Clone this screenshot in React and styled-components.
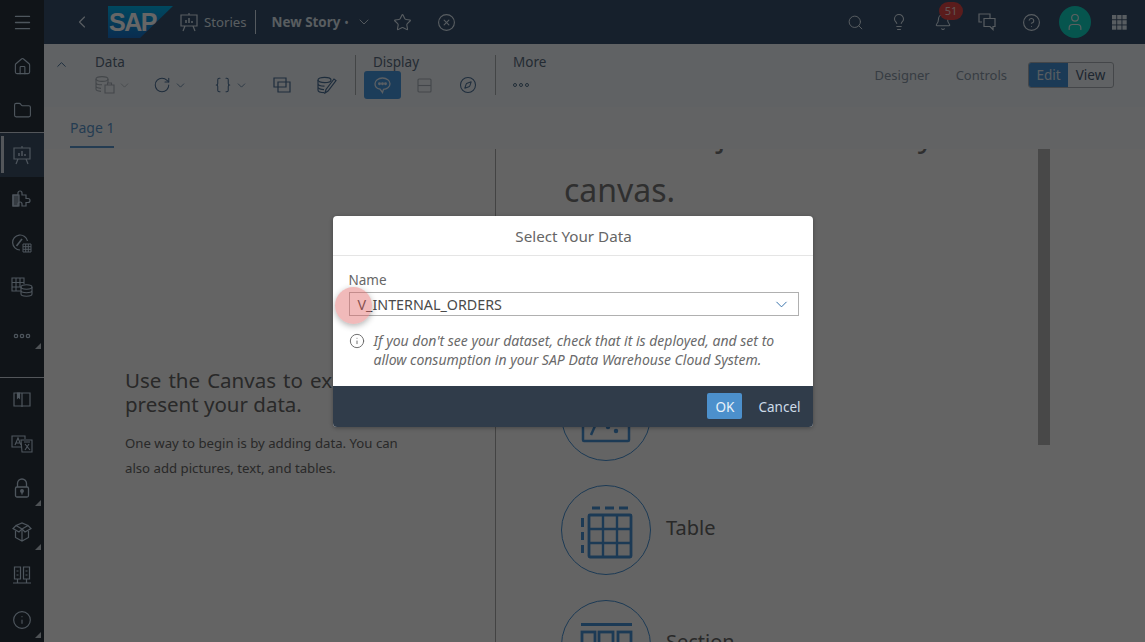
import React from "react";
import styled, { createGlobalStyle } from "styled-components";
import {
  Menu, House, Folder, Info, ChevronLeft, ChevronDown, ChevronUp,
  Search, Lightbulb, Bell, CircleHelp, User, Star, CircleX, RotateCw, Braces, Compass,
} from "lucide-react";

const GlobalStyle = createGlobalStyle`
  html, body { margin: 0; padding: 0; height: 100%; overflow: hidden; }
  body { font-family: "Noto Sans", "Open Sans", sans-serif; }
  * { box-sizing: border-box; }
`;

const Shell = styled.div`
  position: relative;
  display: flex;
  width: 1145px;
  height: 642px;
  overflow: hidden;
  background: #fafafa;
`;

const Sidebar = styled.nav`
  width: 44px;
  flex-shrink: 0;
  display: flex;
  flex-direction: column;
  background: #28343e;
  color: #c4d6e8;
`;

const SideGroup = styled.div`
  display: flex;
  flex-direction: column;
  border-top: ${(p) => (p.$line ? "1px solid #d0d8e0" : "none")};
  margin-top: ${(p) => p.$push || 0}px;
`;

const SideItem = styled.div`
  position: relative;
  height: 44px;
  display: flex;
  align-items: center;
  justify-content: center;
  padding-top: ${(p) => (p.$dots ? "10px" : "0")};
  background: ${(p) => (p.$active ? "#3c5168" : "transparent")};

  ${(p) =>
    p.$active &&
    `&::before {
      content: "";
      position: absolute;
      left: 1px;
      top: 3px;
      bottom: 4px;
      width: 3px;
      background: #d0d8e0;
    }`}

  ${(p) =>
    p.$corner &&
    `&::after {
      content: "";
      position: absolute;
      right: 3px;
      bottom: 4px;
      border-style: solid;
      border-width: 0 0 6px 6px;
      border-color: transparent transparent #c4ccd4 transparent;
    }`}
`;

const Main = styled.div`
  flex: 1;
  min-width: 0;
  display: flex;
  flex-direction: column;
`;

const Header = styled.header`
  height: 44px;
  flex-shrink: 0;
  display: flex;
  align-items: center;
  background: #37506e;
  color: #dce8f2;
  padding-left: 28px;
`;

const BackButton = styled.div`
  width: 20px;
  display: flex;
  justify-content: center;
  margin-right: 16px;
`;

const CrumbIcon = styled.div`
  display: flex;
  margin: 0 5px 0 6px;
`;

const Crumb = styled.span`
  font-size: 13.2px;
  color: #dfe8f0;
  white-space: nowrap;
`;

const Separator = styled.div`
  width: 1px;
  height: 24px;
  background: #d5e2ee;
  margin: 0 16px 0 8px;
`;

const StoryName = styled.span`
  font-size: 13.4px;
  font-weight: 700;
  color: #dfe8f0;
  white-space: nowrap;
`;

const Dirty = styled.span`
  font-size: 12px;
  margin: 0 7px 0 4px;
`;

const HeaderIcon = styled.div`
  position: relative;
  width: 44px;
  height: 44px;
  flex-shrink: 0;
  display: flex;
  align-items: center;
  justify-content: center;
`;

const HeaderLeft = styled.div`
  display: flex;
  margin-left: 9px;
`;

const HeaderRight = styled.div`
  margin-left: auto;
  display: flex;
  margin-right: 4px;
`;

const Badge = styled.span`
  position: absolute;
  left: 18px;
  top: 2px;
  width: 24px;
  height: 18px;
  border-radius: 9px;
  background: #e04848;
  color: #f4d4d4;
  font-size: 11px;
  line-height: 18px;
  text-align: center;
`;

const Avatar = styled.div`
  width: 32px;
  height: 32px;
  border-radius: 50%;
  background: #10d4c4;
  display: flex;
  align-items: center;
  justify-content: center;
  color: #e6f2f0;
`;

const Toolbar = styled.div`
  height: 63px;
  flex-shrink: 0;
  display: flex;
  background: #f0f5fa;
  padding: 11px 31px 0 10px;
`;

const Collapse = styled.div`
  width: 14px;
  height: 14px;
  margin-right: 27px;
  color: #3d6a94;
`;

const ToolGroup = styled.div`
  display: flex;
  flex-direction: column;
  width: ${(p) => p.$width}px;
  height: 40px;
  flex-shrink: 0;
  border-right: ${(p) => (p.$line ? "1px solid #a8acb0" : "none")};
`;

const ToolLabel = styled.div`
  font-size: 13.5px;
  line-height: 15px;
  height: 15px;
  margin-left: ${(p) => p.$indent || 0}px;
  color: #5a6c80;
`;

const ToolRow = styled.div`
  display: flex;
  align-items: center;
  min-height: 28px;
  margin-top: 1px;
  margin-left: ${(p) => p.$indent || 0}px;
`;

const ToolButton = styled.div`
  width: ${(p) => p.$width || 36}px;
  height: 28px;
  margin-right: ${(p) => p.$gap || 0}px;
  flex-shrink: 0;
  display: flex;
  align-items: center;
  justify-content: center;
  gap: 3px;
  border-radius: 3px;
  background: ${(p) => (p.$active ? "#4898e0" : "transparent")};
  color: ${(p) => (p.$active ? "#e4eef8" : p.$disabled ? "#a8b0b8" : "#4c7096")};
`;

const ToolDots = styled.div`
  display: flex;
  gap: 2px;
`;

const Dot = styled.span`
  width: 4px;
  height: 4px;
  border-radius: 50%;
  border: 1px solid #52708c;
`;

const ToolbarRight = styled.div`
  margin-left: auto;
  display: flex;
  align-items: center;
  height: 26px;
  margin-top: 7px;
`;

const ViewLink = styled.span`
  font-size: 13px;
  color: #8a98a8;
  margin-right: ${(p) => p.$gap}px;
`;

const Segmented = styled.div`
  display: flex;
  height: 26px;
  border: 1px solid #aab0b6;
  border-radius: 3px;
  overflow: hidden;
`;

const Segment = styled.div`
  width: ${(p) => p.$width}px;
  display: flex;
  align-items: center;
  justify-content: center;
  font-size: 13.5px;
  background: ${(p) => (p.$on ? "#4591d7" : "transparent")};
  color: ${(p) => (p.$on ? "#dde8f2" : "#4a6078")};
`;

const Tabs = styled.div`
  height: 42px;
  flex-shrink: 0;
  padding-left: 26px;
  background: #f6f8fa;
`;

const Tab = styled.div`
  display: inline-block;
  height: 41px;
  padding-top: 10px;
  font-size: 14px;
  line-height: 22px;
  color: #5a96cc;
  border-bottom: 2px solid #5a96cc;
  width: 44px;
  white-space: nowrap;
`;

const Content = styled.div`
  flex: 1;
  min-height: 0;
  display: flex;
  background: #fafafa;
`;

const IntroPanel = styled.section`
  width: 452px;
  flex-shrink: 0;
  border-right: 1px solid #a8a8a8;
  padding: 219px 81px 0;
`;

const IntroTitle = styled.h2`
  margin: 0 0 15px;
  font-size: 20.5px;
  line-height: 24px;
  font-weight: 400;
  color: #666;
  white-space: nowrap;

  &::first-line {
    word-spacing: 1.75px;
  }
`;

const IntroText = styled.p`
  margin: 0;
  font-size: 13.2px;
  line-height: 25px;
  color: #666;
  width: 290px;
`;

const ObjectsPanel = styled.section`
  flex: 1;
  min-width: 0;
  display: flex;
  overflow: hidden;
`;

const ObjectsBody = styled.div`
  flex: 1;
  min-width: 0;
  padding-left: 65px;
`;

const ObjectsTitle = styled.h2`
  margin: -43px 0 0 3px;
  font-size: 32px;
  line-height: 56px;
  font-weight: 400;
  color: #777;
  white-space: nowrap;
`;

const ObjectList = styled.div`
  display: flex;
  flex-direction: column;
  gap: 24.5px;
  margin-top: 38px;
`;

const ObjectItem = styled.div`
  display: flex;
  align-items: center;
  gap: 15px;
`;

const ObjectCircle = styled.div`
  width: 90px;
  height: 90px;
  flex-shrink: 0;
  border-radius: 50%;
  border: 1px solid #4691d4;
  color: #4691d4;
`;

const ObjectName = styled.span`
  font-size: 20px;
  color: #666;
  margin-bottom: 6px;
`;

const ScrollThumb = styled.div`
  width: 12px;
  height: 296px;
  flex-shrink: 0;
  margin-right: 95px;
  background: #b4b4b4;
`;

const Overlay = styled.div`
  position: absolute;
  inset: 0;
  background: rgba(0, 0, 0, 0.6);
  display: flex;
  align-items: center;
  justify-content: center;
`;

const Dialog = styled.div`
  position: relative;
  width: 480px;
  height: 211px;
  display: flex;
  flex-direction: column;
  background: #fff;
  border-radius: 4px;
  overflow: hidden;
  box-shadow: 0 1px 4px rgba(0, 0, 0, 0.3);
`;

const DialogTitle = styled.div`
  height: 40px;
  flex-shrink: 0;
  display: flex;
  align-items: center;
  justify-content: center;
  padding: 1px 0 0 2px;
  border-bottom: 1px solid #e5e5e5;
  font-size: 15.2px;
  color: #666;
`;

const DialogBody = styled.div`
  flex: 1;
  padding: 15px 14px 0 16px;
`;

const FieldLabel = styled.label`
  display: block;
  font-size: 13.5px;
  line-height: 18px;
  color: #666;
`;

const SelectBox = styled.div`
  height: 24px;
  margin-top: 3px;
  padding: 1px 7px 0 8px;
  display: flex;
  align-items: center;
  justify-content: space-between;
  border: 1px solid #b0b0b0;
  font-size: 14.3px;
  color: #4a4a4a;
`;

const Hint = styled.div`
  display: flex;
  gap: 9px;
  margin-top: 17px;
  color: #666;

  svg {
    flex-shrink: 0;
  }
`;

const HintText = styled.p`
  margin: -2px 0 0;
  font-size: 14px;
  line-height: 19.5px;
  font-style: italic;
  color: #6a6a6a;
`;

const DialogFooter = styled.div`
  height: 41px;
  flex-shrink: 0;
  display: flex;
  align-items: center;
  justify-content: flex-end;
  gap: 16px;
  padding-right: 12px;
  background: #303c4a;
`;

const OkButton = styled.div`
  width: 35px;
  height: 26px;
  padding-top: 1px;
  display: flex;
  align-items: center;
  justify-content: center;
  border-radius: 2px;
  background: #4c90cc;
  color: #e8f2fa;
  font-size: 13.5px;
`;

const CancelButton = styled.div`
  padding-top: 2px;
  font-size: 13.5px;
  color: #cddbe8;
`;

const ClickMark = styled.div`
  position: absolute;
  left: 2px;
  top: 71px;
  width: 37px;
  height: 37px;
  border-radius: 50%;
  background: rgba(222, 90, 90, 0.42);
  box-shadow: 0 2px 6px rgba(0, 0, 0, 0.3);
`;

const thin = { strokeWidth: 1.4 };

const SapLogo = () => (
  <svg width="65" height="33" viewBox="0 0 65 33">
    <defs>
      <linearGradient id="sapFill" x1="0" y1="0" x2="0" y2="1">
        <stop offset="0" stopColor="#00b4ee" />
        <stop offset="1" stopColor="#1a70c8" />
      </linearGradient>
    </defs>
    <polygon points="0,0 65,0 32,32 0,32" fill="url(#sapFill)" />
    <text x="1" y="25" fontFamily="Liberation Sans" fontWeight="700" fontSize="25" letterSpacing="-1.5" fill="#fff">
      SAP
    </text>
  </svg>
);

const BoardIcon = () => (
  <svg width="20" height="20" viewBox="0 0 20 20" fill="none" stroke="currentColor" strokeWidth="1.2">
    <path d="M10 1v2M2 3h16v11H2zM6 14l-2 5M14 14l2 5" />
    <path d="M7 11V8M10 11V6M13 11V9" strokeWidth="1.5" />
  </svg>
);

const BookIcon = () => (
  <svg width="18" height="18" viewBox="0 0 18 18" fill="none" stroke="currentColor" strokeWidth="1.2">
    <path d="M1 2h16v13H1zM9 2v14" />
    <path d="M4.500 2h2v5l-1-1-1 1z" fill="currentColor" />
  </svg>
);

const LockIcon = () => (
  <svg width="16" height="20" viewBox="0 0 16 20" fill="none" stroke="currentColor" strokeWidth="1.3">
    <path d="M3.500 9V5.500a4.500 4.500 0 0 1 9 0V9" />
    <rect x="1.500" y="9" width="13" height="10" rx="1.500" />
    <circle cx="8" cy="13" r="1.300" fill="currentColor" />
    <path d="M8 13v3.500" />
  </svg>
);

const PuzzleIcon = () => (
  <svg width="20" height="18" viewBox="0 0 20 18" fill="none" stroke="currentColor" strokeWidth="1.2">
    <path d="M1 5h5V3a2 2 0 0 1 4 0v2h4v3.500h2a2 2 0 0 1 0 4h-2V16H10v-2a2 2 0 0 0-4 0v2H1z" />
    <path d="M1 5h6v11H1z" fill="currentColor" fillOpacity="0.6" />
  </svg>
);

const GaugeIcon = () => (
  <svg width="20" height="20" viewBox="0 0 20 20" fill="none" stroke="currentColor" strokeWidth="1.2">
    <path d="M8 17A7.500 7.500 0 1 1 15.500 8" />
    <path d="M4.500 13L10 6" strokeWidth="1.6" />
    <path d="M11 11h8v8h-8zM13.700 11v8M16.300 11v8M11 13.700h8M11 16.300h8" strokeWidth="1" />
  </svg>
);

const TableDbIcon = () => (
  <svg width="22" height="20" viewBox="0 0 22 20" fill="none" stroke="currentColor" strokeWidth="1.1">
    <path d="M10 14H1V1h12v6M1 5.500h12M1 10h9M5 1v13M9 1v9" />
    <ellipse cx="15.500" cy="10" rx="5.500" ry="2.200" />
    <path d="M10 10v7c0 1.200 2.500 2.200 5.500 2.200s5.500-1 5.500-2.200v-7M10 13.500c0 1.200 2.500 2.200 5.500 2.200s5.500-1 5.500-2.200" />
  </svg>
);

const SideDots = () => (
  <svg width="18" height="6" viewBox="0 0 18 6" fill="none" stroke="currentColor" strokeWidth="1.2">
    <circle cx="3" cy="3" r="1.700" />
    <circle cx="9" cy="3" r="1.700" />
    <circle cx="15" cy="3" r="1.700" />
  </svg>
);

const TranslateIcon = () => (
  <svg width="22" height="18" viewBox="0 0 22 18" fill="none" stroke="currentColor" strokeWidth="1.1">
    <path d="M11 12H1V1h13v3" />
    <path d="M4 10l3-7 3 7M5 8h4" />
    <path d="M10 5h11v12H11z" />
    <path d="M13 7h6M14 9l5 6M18 9l-4 6" />
  </svg>
);

const BoxIcon = () => (
  <svg width="20" height="20" viewBox="0 0 20 20" fill="none" stroke="currentColor" strokeWidth="1.2">
    <path d="M10 7L4 3.500 1 6.500l6 3.500zM10 7l6-3.500 3 3-6 3.500zM4 3.500L10 1l6 2.500" />
    <path d="M3.500 9v6.500L10 19l6.500-3.500V9M10 7v12" />
  </svg>
);

const ServersIcon = () => (
  <svg width="18" height="20" viewBox="0 0 18 20" fill="none" stroke="currentColor" strokeWidth="1.2">
    <path d="M1.500 1h6v12h-6zM10.500 1h6v12h-6zM4.500 13v4M13.500 13v4M0 17h18M3.500 5h2M12.500 5h2M3.500 9h2M12.500 9h2" />
  </svg>
);

const ChatsIcon = () => (
  <svg width="18" height="18" viewBox="0 0 18 18" fill="none" stroke="currentColor" strokeWidth="1.2">
    <path d="M4 9H1V1h11v4" />
    <path d="M6 5.500h11v8h-2v3l-3-3H6z" />
  </svg>
);

const GridIcon = () => (
  <svg width="15" height="15" viewBox="0 0 15 15" fill="currentColor">
    {[0, 5.2, 10.4].map((y) =>
      [0, 5.2, 10.4].map((x) => <rect key={`${x}-${y}`} x={x} y={y} width="4.300" height="4.300" />)
    )}
  </svg>
);

const DbLockIcon = () => (
  <svg width="20" height="18" viewBox="0 0 20 18" fill="none" stroke="currentColor" strokeWidth="1.1">
    <ellipse cx="7" cy="3" rx="6" ry="2.400" />
    <path d="M1 3v10c0 1.200 2 2.200 5 2.400M13 3v4M1 6.400c0 1.300 2.700 2.400 6 2.400M1 10c0 1.300 2 2.200 5 2.400" />
    <path d="M10 9h9v8h-9zM12.500 9V7h4v2" />
  </svg>
);

const CopyIcon = () => (
  <svg width="18" height="16" viewBox="0 0 18 16" fill="none" stroke="currentColor" strokeWidth="1.2">
    <path d="M1 1h12v9H1z" />
    <path d="M5 5h12v10H5z" />
  </svg>
);

const DbEditIcon = () => (
  <svg width="20" height="18" viewBox="0 0 20 18" fill="none" stroke="currentColor" strokeWidth="1.2">
    <ellipse cx="7.500" cy="4" rx="6.500" ry="2.600" />
    <path d="M1 4v10c0 1.400 2.900 2.600 6.500 2.600M1 7.500c0 1.400 2.900 2.600 6.500 2.600M1 11c0 1.400 2.900 2.600 6 2.600" />
    <path d="M8 17l1-3.500L17 3l2 1.500-8 10.500z" />
  </svg>
);

const BubbleIcon = () => (
  <svg width="17" height="17" viewBox="0 0 17 17" fill="none" stroke="currentColor" strokeWidth="1.300">
    <path d="M8.500 1c4.200 0 7.500 2.500 7.500 5.700s-3.300 5.600-6.500 5.600l-1 3.200-2.500-3.400C3.200 11.600 1 9.400 1 6.700 1 3.500 4.300 1 8.500 1z" />
    <circle cx="5.500" cy="6.700" r="0.800" fill="currentColor" />
    <circle cx="8.500" cy="6.700" r="0.800" fill="currentColor" />
    <circle cx="11.500" cy="6.700" r="0.800" fill="currentColor" />
  </svg>
);

const SplitIcon = () => (
  <svg width="16" height="15" viewBox="0 0 16 15" fill="none" stroke="currentColor" strokeWidth="1.100">
    <rect x="1" y="1" width="13" height="13" rx="1" />
    <path d="M1 7.500h13" />
  </svg>
);

const ImageGlyph = () => (
  <svg width="88" height="88" viewBox="1 1 88 88" fill="none" stroke="currentColor" strokeWidth="2.500">
    <rect x="22" y="24" width="46" height="46" rx="1" />
    <path d="M30 64l4-9" />
    <circle cx="47" cy="56" r="1" fill="currentColor" />
    <circle cx="55" cy="60" r="1" fill="currentColor" />
  </svg>
);

const ChartGlyph = () => (
  <svg width="88" height="88" viewBox="1 1 88 88" fill="none" stroke="currentColor" strokeWidth="2.500">
    <path d="M24 24v42h44M34 60V44M46 60V34M58 60V50" />
  </svg>
);

const TableGlyph = () => (
  <svg width="88" height="88" viewBox="1 1 88 88" fill="none" stroke="currentColor">
    <rect x="28" y="30" width="42" height="42" rx="1" strokeWidth="2.800" />
    <path d="M42 30v42M56 30v42M28 44h42M28 58h42" strokeWidth="2.400" />
    <path d="M31 23h8M44 23h9M58 23h9M21.500 33v9M21.500 47v8M21.500 60v8" strokeWidth="3" />
  </svg>
);

const SectionGlyph = () => (
  <svg width="88" height="88" viewBox="1 1 88 88" fill="none" stroke="currentColor" strokeWidth="2.800">
    <path d="M20 24.500h51" />
    <rect x="21" y="32" width="13" height="18" />
    <rect x="38" y="32" width="14" height="18" />
    <rect x="57" y="32" width="13" height="18" />
    <path d="M20 58h51" />
  </svg>
);

const objects = [
  { name: "Chart", glyph: <ChartGlyph /> },
  { name: "Picture", glyph: <ImageGlyph /> },
  { name: "Table", glyph: <TableGlyph /> },
  { name: "Section", glyph: <SectionGlyph /> },
];

export default function App() {
  return (
    <Shell>
      <GlobalStyle />
      <Sidebar>
        <SideItem><Menu size={21} strokeWidth={1.5} /></SideItem>
        <SideItem><House size={19} {...thin} /></SideItem>
        <SideItem><Folder size={19} {...thin} /></SideItem>
        <SideGroup $line>
          <SideItem $active><BoardIcon /></SideItem>
          <SideItem><PuzzleIcon /></SideItem>
          <SideItem><GaugeIcon /></SideItem>
          <SideItem><TableDbIcon /></SideItem>
          <SideItem $corner $dots><SideDots /></SideItem>
        </SideGroup>
        <SideGroup $line $push={24}>
          <SideItem><BookIcon /></SideItem>
          <SideItem><TranslateIcon /></SideItem>
          <SideItem $corner><LockIcon /></SideItem>
          <SideItem $corner><BoxIcon /></SideItem>
          <SideItem><ServersIcon /></SideItem>
          <SideItem $corner><Info size={20} {...thin} /></SideItem>
        </SideGroup>
      </Sidebar>
      <Main>
        <Header>
          <BackButton><ChevronLeft size={24} {...thin} /></BackButton>
          <SapLogo />
          <CrumbIcon><BoardIcon /></CrumbIcon>
          <Crumb>Stories</Crumb>
          <Separator />
          <StoryName>New Story</StoryName>
          <Dirty>•</Dirty>
          <ChevronDown size={16} {...thin} />
          <HeaderLeft>
            <HeaderIcon><Star size={19} {...thin} /></HeaderIcon>
            <HeaderIcon><CircleX size={19} {...thin} /></HeaderIcon>
          </HeaderLeft>
          <HeaderRight>
            <HeaderIcon><Search size={17} {...thin} /></HeaderIcon>
            <HeaderIcon><Lightbulb size={18} {...thin} /></HeaderIcon>
            <HeaderIcon>
              <Bell size={18} {...thin} />
              <Badge>51</Badge>
            </HeaderIcon>
            <HeaderIcon><ChatsIcon /></HeaderIcon>
            <HeaderIcon><CircleHelp size={19} {...thin} /></HeaderIcon>
            <HeaderIcon>
              <Avatar><User size={20} {...thin} /></Avatar>
            </HeaderIcon>
            <HeaderIcon><GridIcon /></HeaderIcon>
          </HeaderRight>
        </Header>
        <Toolbar>
          <Collapse><ChevronUp size={15} strokeWidth={1.5} /></Collapse>
          <ToolGroup $width={261} $line>
            <ToolLabel>Data</ToolLabel>
            <ToolRow $indent={-2.5}>
              <ToolButton $disabled $width={40} $gap={17}>
                <DbLockIcon />
                <ChevronDown size={13} {...thin} />
              </ToolButton>
              <ToolButton $width={40} $gap={20}>
                <RotateCw size={18} {...thin} />
                <ChevronDown size={13} {...thin} />
              </ToolButton>
              <ToolButton $width={42} $gap={12.5}>
                <Braces size={18} {...thin} />
                <ChevronDown size={13} {...thin} />
              </ToolButton>
              <ToolButton $width={36} $gap={9}><CopyIcon /></ToolButton>
              <ToolButton $width={36}><DbEditIcon /></ToolButton>
            </ToolRow>
          </ToolGroup>
          <ToolGroup $width={140} $line>
            <ToolLabel $indent={17}>Display</ToolLabel>
            <ToolRow $indent={8}>
              <ToolButton $active $width={37} $gap={6}><BubbleIcon /></ToolButton>
              <ToolButton $disabled $width={36} $gap={7}><SplitIcon /></ToolButton>
              <ToolButton $width={36}><Compass size={18} {...thin} /></ToolButton>
            </ToolRow>
          </ToolGroup>
          <ToolGroup $width={80}>
            <ToolLabel $indent={17}>More</ToolLabel>
            <ToolRow $indent={17}>
              <ToolDots><Dot /><Dot /><Dot /></ToolDots>
            </ToolRow>
          </ToolGroup>
          <ToolbarRight>
            <ViewLink $gap={26}>Designer</ViewLink>
            <ViewLink $gap={21}>Controls</ViewLink>
            <Segmented>
              <Segment $on $width={39}>Edit</Segment>
              <Segment $width={45}>View</Segment>
            </Segmented>
          </ToolbarRight>
        </Toolbar>
        <Tabs><Tab>Page 1</Tab></Tabs>
        <Content>
          <IntroPanel>
            <IntroTitle>
              Use the Canvas to explore and
              <br />
              present your data.
            </IntroTitle>
            <IntroText>
              One way to begin is by adding data. You can also add pictures, text, and tables.
            </IntroText>
          </IntroPanel>
          <ObjectsPanel>
            <ObjectsBody>
              <ObjectsTitle>
                Add an object to the tray
                <br />
                canvas.
              </ObjectsTitle>
              <ObjectList>
                {objects.map((item) => (
                  <ObjectItem key={item.name}>
                    <ObjectCircle>{item.glyph}</ObjectCircle>
                    <ObjectName>{item.name}</ObjectName>
                  </ObjectItem>
                ))}
              </ObjectList>
            </ObjectsBody>
            <ScrollThumb />
          </ObjectsPanel>
        </Content>
      </Main>
      <Overlay>
        <Dialog>
          <DialogTitle>Select Your Data</DialogTitle>
          <DialogBody>
            <FieldLabel>Name</FieldLabel>
            <SelectBox>
              V_INTERNAL_ORDERS
              <ChevronDown size={19} color="#2f6da8" strokeWidth={1.2} />
            </SelectBox>
            <Hint>
              <Info size={16} {...thin} />
              <HintText>
                If you don't see your dataset, check that it is deployed, and set to allow consumption in your SAP Data Warehouse Cloud System.
              </HintText>
            </Hint>
          </DialogBody>
          <DialogFooter>
            <OkButton>OK</OkButton>
            <CancelButton>Cancel</CancelButton>
          </DialogFooter>
          <ClickMark />
        </Dialog>
      </Overlay>
    </Shell>
  );
}
